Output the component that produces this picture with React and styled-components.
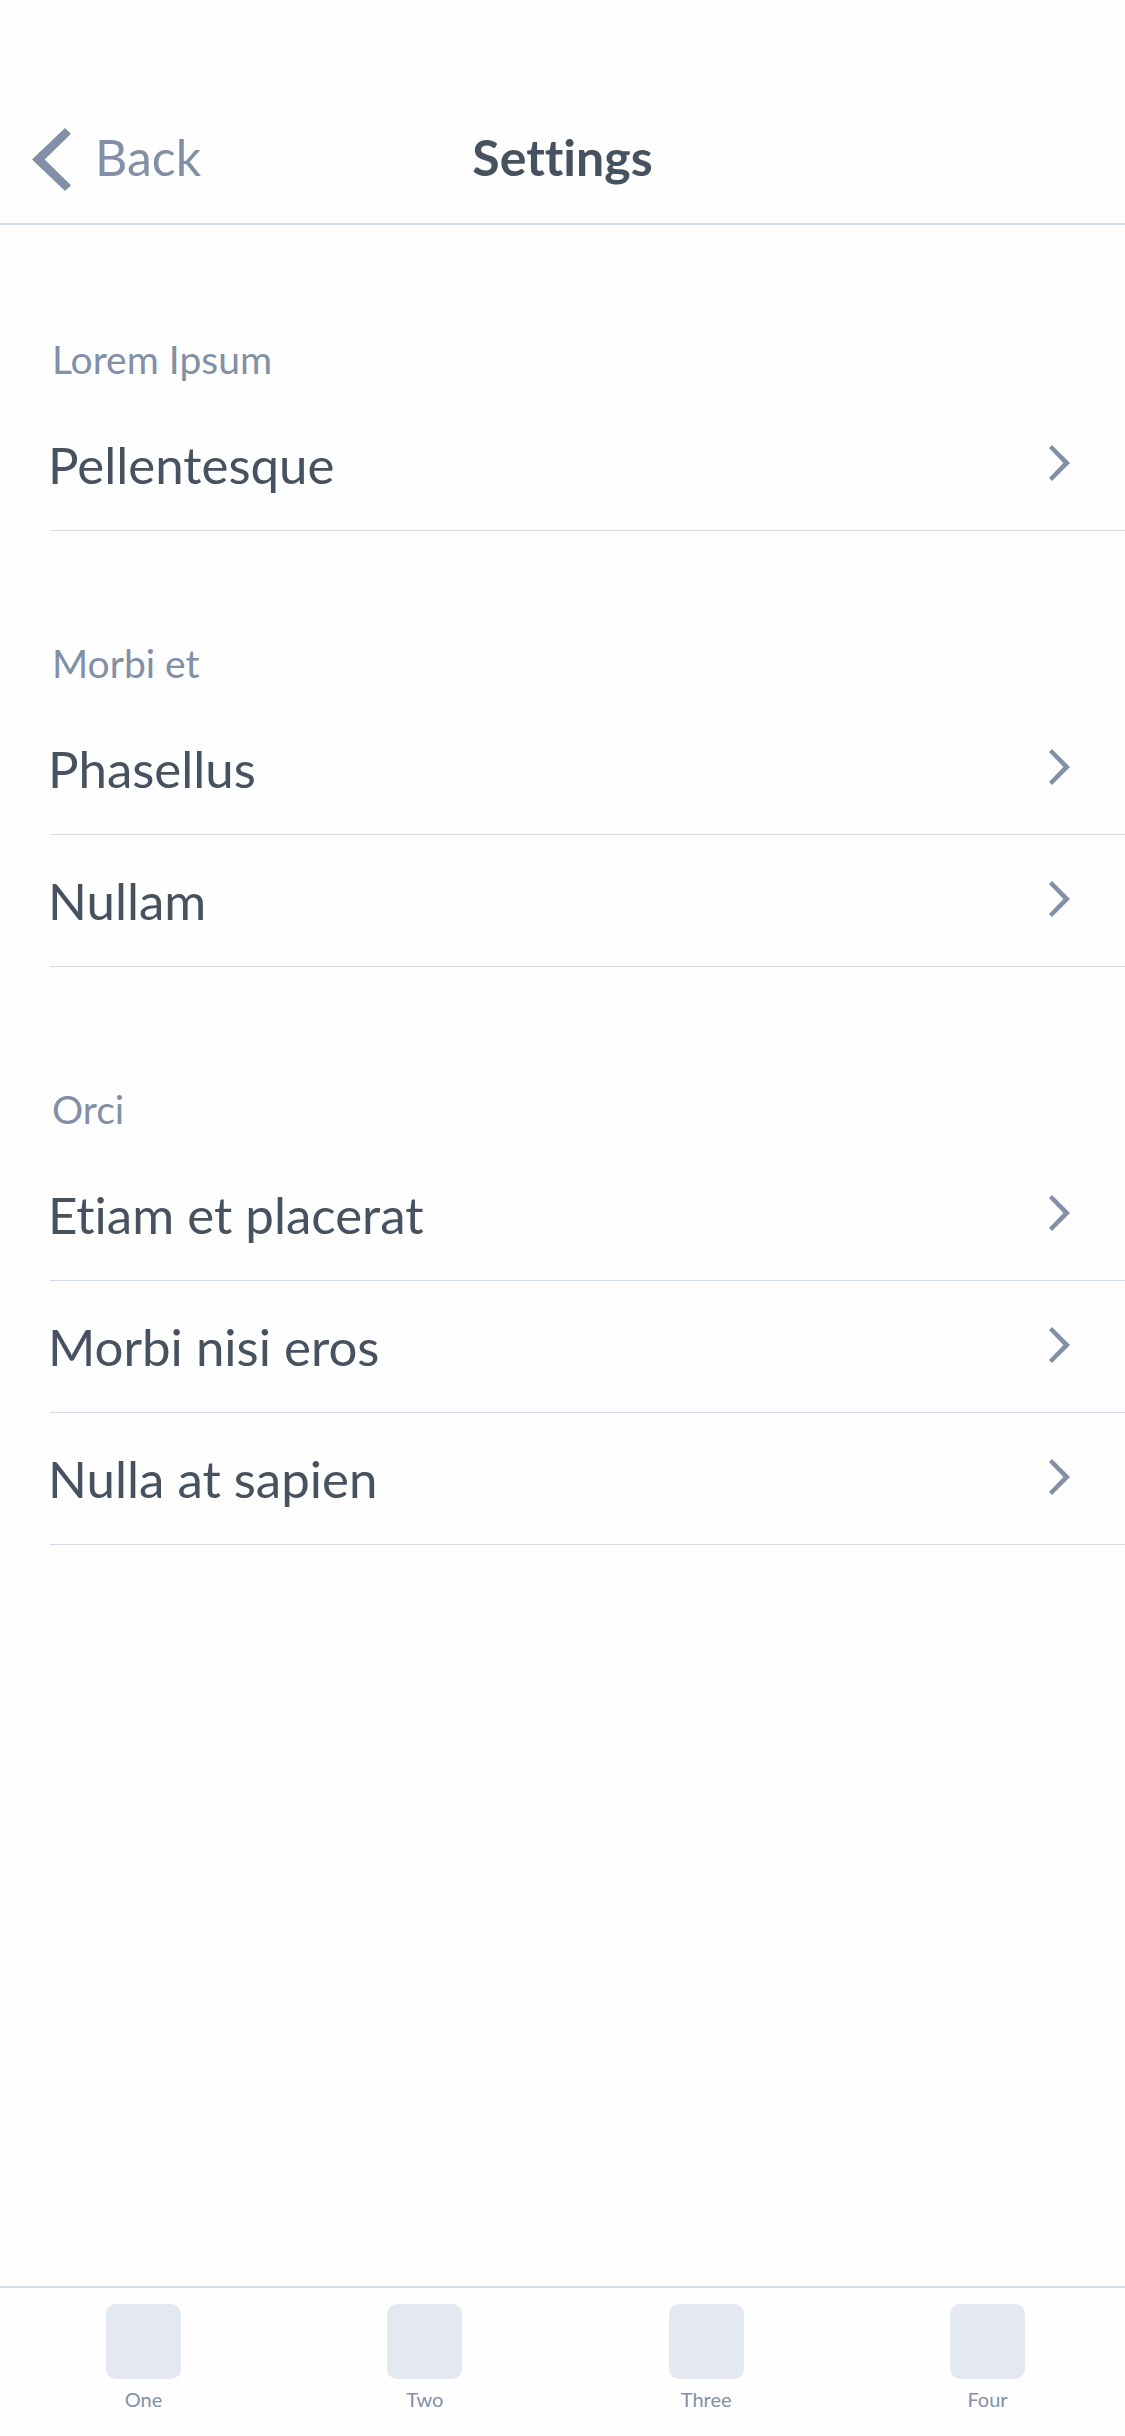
import React from "react";
import styled, { createGlobalStyle } from "styled-components";

const colors = {
  page: "#fefefe",
  text: "#475260",
  muted: "#8190a7",
  line: "#d4dbe9",
  tile: "#e4e8f1",
};

const GlobalStyle = createGlobalStyle`
  *, *::before, *::after { box-sizing: border-box; }
  body {
    margin: 0;
    background: ${colors.page};
    color: ${colors.text};
    font-family: Lato, "Noto Sans", sans-serif;
    font-variant-ligatures: none;
  }
  button { font: inherit; font-variant-ligatures: none; color: inherit; background: none; border: 0; padding: 0; cursor: pointer; }
  ul { list-style: none; margin: 0; padding: 0; }
`;

const Screen = styled.div`
  display: flex;
  flex-direction: column;
  min-height: 100vh;
`;

const Header = styled.header`
  display: grid;
  grid-template-columns: 1fr auto 1fr;
  align-items: center;
  padding: 122px 32px 31px;
  border-bottom: 2px solid ${colors.line};
`;

const BackButton = styled.button`
  display: flex;
  align-items: center;
  gap: 24px;
  justify-self: start;
  && { color: ${colors.muted}; font-size: 50px; line-height: 60px; }
`;

const Title = styled.h1`
  margin: 0;
  font-size: 50px;
  line-height: 60px;
  font-weight: 700;
`;

const Content = styled.main`
  flex: 1;
  padding-top: 110px;
`;

const Section = styled.section`
  margin-bottom: ${(p) => (p.$spacious ? 118 : 108)}px;
`;

const SectionTitle = styled.h2`
  margin: 0;
  padding: 0 52px 16px;
  color: ${colors.muted};
  font-size: 39px;
  line-height: 48px;
  font-weight: 400;
`;

const Divider = styled.div`
  height: 1px;
  margin-left: 50px;
  background: ${colors.line};
`;

const Row = styled.button`
  display: flex;
  align-items: center;
  justify-content: space-between;
  width: 100%;
  height: 131px;
  && { padding: 0 55px 0 48px; font-size: 51px; line-height: 60px; text-align: left; }
`;

const TabBar = styled.nav`
  display: flex;
  justify-content: space-between;
  padding: 16px 100px 25px 106px;
  border-top: 2px solid ${colors.line};
`;

const Tab = styled.button`
  display: flex;
  flex-direction: column;
  align-items: center;
  gap: 8px;
  width: 75px;
  && { color: ${colors.muted}; font-size: 20px; line-height: 24px; }
`;

const Tile = styled.span`
  width: 75px;
  height: 75px;
  border-radius: 10px;
  background: ${colors.tile};
`;

const BackIcon = () => (
  <svg width="39" height="70" viewBox="0 0 39 70" fill={colors.muted} aria-hidden="true">
    <path d="M33 6 L39 11.7 L12.7 37.5 L39 63.3 L33 69 L0 37.5 Z" />
  </svg>
);

const ChevronIcon = () => (
  <svg width="21" height="39" viewBox="0 0 21 39" fill={colors.muted} aria-hidden="true">
    <path d="M3 0 L21 18 L3 36 L0 33 L14.3 18 L0 3 Z" />
  </svg>
);

const sections = [
  { title: "Lorem Ipsum", items: ["Pellentesque"] },
  { title: "Morbi et", items: ["Phasellus", "Nullam"], spacious: true },
  { title: "Orci", items: ["Etiam et placerat", "Morbi nisi eros", "Nulla at sapien"] },
];

const tabs = ["One", "Two", "Three", "Four"];

export default function App() {
  return (
    <Screen>
      <GlobalStyle />
      <Header>
        <BackButton type="button">
          <BackIcon />
          Back
        </BackButton>
        <Title>Settings</Title>
      </Header>
      <Content>
        {sections.map((section) => (
          <Section key={section.title} $spacious={section.spacious}>
            <SectionTitle>{section.title}</SectionTitle>
            <ul>
              {section.items.map((item) => (
                <li key={item}>
                  <Row type="button">
                    {item}
                    <ChevronIcon />
                  </Row>
                  <Divider />
                </li>
              ))}
            </ul>
          </Section>
        ))}
      </Content>
      <TabBar>
        {tabs.map((tab) => (
          <Tab key={tab} type="button">
            <Tile />
            {tab}
          </Tab>
        ))}
      </TabBar>
    </Screen>
  );
}
